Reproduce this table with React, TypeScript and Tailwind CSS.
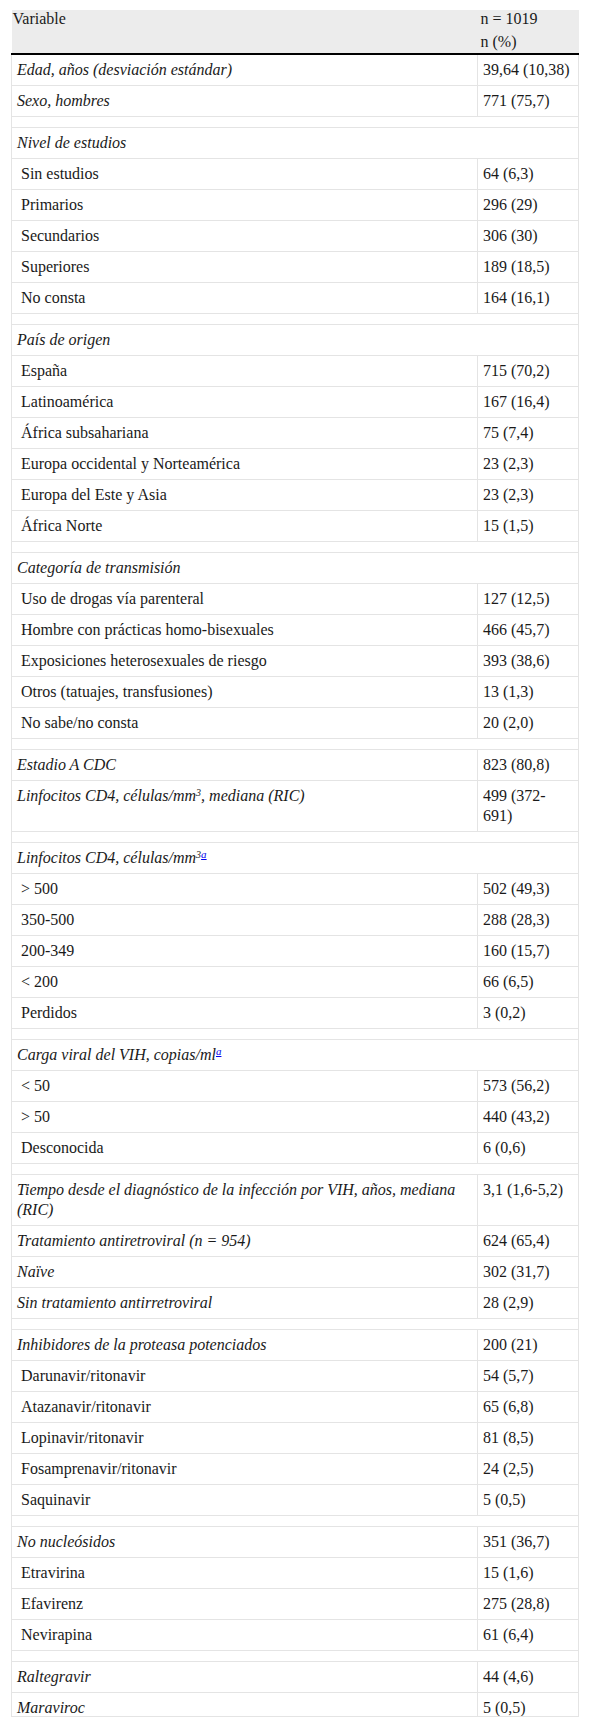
import type { ReactNode } from "react";

type Row =
  | { kind: "row"; label: ReactNode; value: ReactNode; italic?: boolean; indent?: boolean }
  | { kind: "section"; label: ReactNode }
  | { kind: "gap" };

const Note = () => (
  <sup className="text-[11px] leading-none">
    <a href="#" className="text-[#0000ee] underline">a</a>
  </sup>
);

const sub = (labels: [string, string][]): Row[] =>
  labels.map(([label, value]) => ({ kind: "row", label, value, indent: true }));

const rows: Row[] = [
  { kind: "row", label: "Edad, años (desviación estándar)", value: "39,64 (10,38)", italic: true },
  { kind: "row", label: "Sexo, hombres", value: "771 (75,7)", italic: true },
  { kind: "gap" },
  { kind: "section", label: "Nivel de estudios" },
  ...sub([
    ["Sin estudios", "64 (6,3)"],
    ["Primarios", "296 (29)"],
    ["Secundarios", "306 (30)"],
    ["Superiores", "189 (18,5)"],
    ["No consta", "164 (16,1)"],
  ]),
  { kind: "gap" },
  { kind: "section", label: "País de origen" },
  ...sub([
    ["España", "715 (70,2)"],
    ["Latinoamérica", "167 (16,4)"],
    ["África subsahariana", "75 (7,4)"],
    ["Europa occidental y Norteamérica", "23 (2,3)"],
    ["Europa del Este y Asia", "23 (2,3)"],
    ["África Norte", "15 (1,5)"],
  ]),
  { kind: "gap" },
  { kind: "section", label: "Categoría de transmisión" },
  ...sub([
    ["Uso de drogas vía parenteral", "127 (12,5)"],
    ["Hombre con prácticas homo-bisexuales", "466 (45,7)"],
    ["Exposiciones heterosexuales de riesgo", "393 (38,6)"],
    ["Otros (tatuajes, transfusiones)", "13 (1,3)"],
    ["No sabe/no consta", "20 (2,0)"],
  ]),
  { kind: "gap" },
  { kind: "row", label: "Estadio A CDC", value: "823 (80,8)", italic: true },
  {
    kind: "row",
    label: (
      <>
        Linfocitos CD4, células/mm<sup className="text-[10px] leading-none">3</sup>, mediana (RIC)
      </>
    ),
    value: (
      <>
        499 (372-
        <br />
        691)
      </>
    ),
    italic: true,
  },
  { kind: "gap" },
  {
    kind: "section",
    label: (
      <>
        Linfocitos CD4, células/mm<sup className="text-[10px] leading-none">3</sup>
        <Note />
      </>
    ),
  },
  ...sub([
    ["> 500", "502 (49,3)"],
    ["350-500", "288 (28,3)"],
    ["200-349", "160 (15,7)"],
    ["< 200", "66 (6,5)"],
    ["Perdidos", "3 (0,2)"],
  ]),
  { kind: "gap" },
  {
    kind: "section",
    label: (
      <>
        Carga viral del VIH, copias/ml
        <Note />
      </>
    ),
  },
  ...sub([
    ["< 50", "573 (56,2)"],
    ["> 50", "440 (43,2)"],
    ["Desconocida", "6 (0,6)"],
  ]),
  { kind: "gap" },
  {
    kind: "row",
    label: (
      <>
        Tiempo desde el diagnóstico de la infección por VIH, años, mediana
        <br />
        (RIC)
      </>
    ),
    value: "3,1 (1,6-5,2)",
    italic: true,
  },
  { kind: "row", label: "Tratamiento antiretroviral (n = 954)", value: "624 (65,4)", italic: true },
  { kind: "row", label: "Naïve", value: "302 (31,7)", italic: true },
  { kind: "row", label: "Sin tratamiento antirretroviral", value: "28 (2,9)", italic: true },
  { kind: "gap" },
  { kind: "row", label: "Inhibidores de la proteasa potenciados", value: "200 (21)", italic: true },
  ...sub([
    ["Darunavir/ritonavir", "54 (5,7)"],
    ["Atazanavir/ritonavir", "65 (6,8)"],
    ["Lopinavir/ritonavir", "81 (8,5)"],
    ["Fosamprenavir/ritonavir", "24 (2,5)"],
    ["Saquinavir", "5 (0,5)"],
  ]),
  { kind: "gap" },
  { kind: "row", label: "No nucleósidos", value: "351 (36,7)", italic: true },
  ...sub([
    ["Etravirina", "15 (1,6)"],
    ["Efavirenz", "275 (28,8)"],
    ["Nevirapina", "61 (6,4)"],
  ]),
  { kind: "gap" },
  { kind: "row", label: "Raltegravir", value: "44 (4,6)", italic: true },
  { kind: "row", label: "Maraviroc", value: "5 (0,5)", italic: true },
];

const cell = "border border-[#e4e4e4] pl-[5px] pr-[1px] py-[5px] align-top";

export default function App() {
  return (
    <div className="bg-white px-[11px] pt-[10px] [font-family:'Liberation_Serif','Times_New_Roman',serif] text-[16px] leading-[20px] text-[#1a1a1a]">
      <div className="h-[1707px] overflow-hidden border-b border-[#e4e4e4]">
        <table className="w-full table-fixed border-collapse">
          <colgroup>
            <col className="w-[466px]" />
            <col />
          </colgroup>
          <thead>
            <tr className="bg-[#ececec]">
              <th className="border-b-2 border-black p-0 text-left align-top font-normal">
                <div className="-mt-[3px] h-[46px] pl-[1px] leading-[23px]">Variable</div>
              </th>
              <th className="border-b-2 border-black p-0 text-left align-top font-normal">
                <div className="-mt-[3px] h-[46px] pl-[3px] leading-[23px]">
                  n = 1019
                  <br />n (%)
                </div>
              </th>
            </tr>
          </thead>
          <tbody>
            {rows.map((row, i) => {
              if (row.kind === "gap") {
                return (
                  <tr key={i}>
                    <td colSpan={2} className="border border-[#e4e4e4] p-0 h-[11px]" />
                  </tr>
                );
              }
              if (row.kind === "section") {
                return (
                  <tr key={i}>
                    <td colSpan={2} className={`${cell} italic`}>
                      {row.label}
                    </td>
                  </tr>
                );
              }
              return (
                <tr key={i}>
                  <td className={`${cell} ${row.italic ? "italic" : ""} ${row.indent ? "pl-[9px]" : ""}`}>
                    {row.label}
                  </td>
                  <td className={`${cell} whitespace-nowrap`}>{row.value}</td>
                </tr>
              );
            })}
          </tbody>
        </table>
      </div>
    </div>
  );
}
